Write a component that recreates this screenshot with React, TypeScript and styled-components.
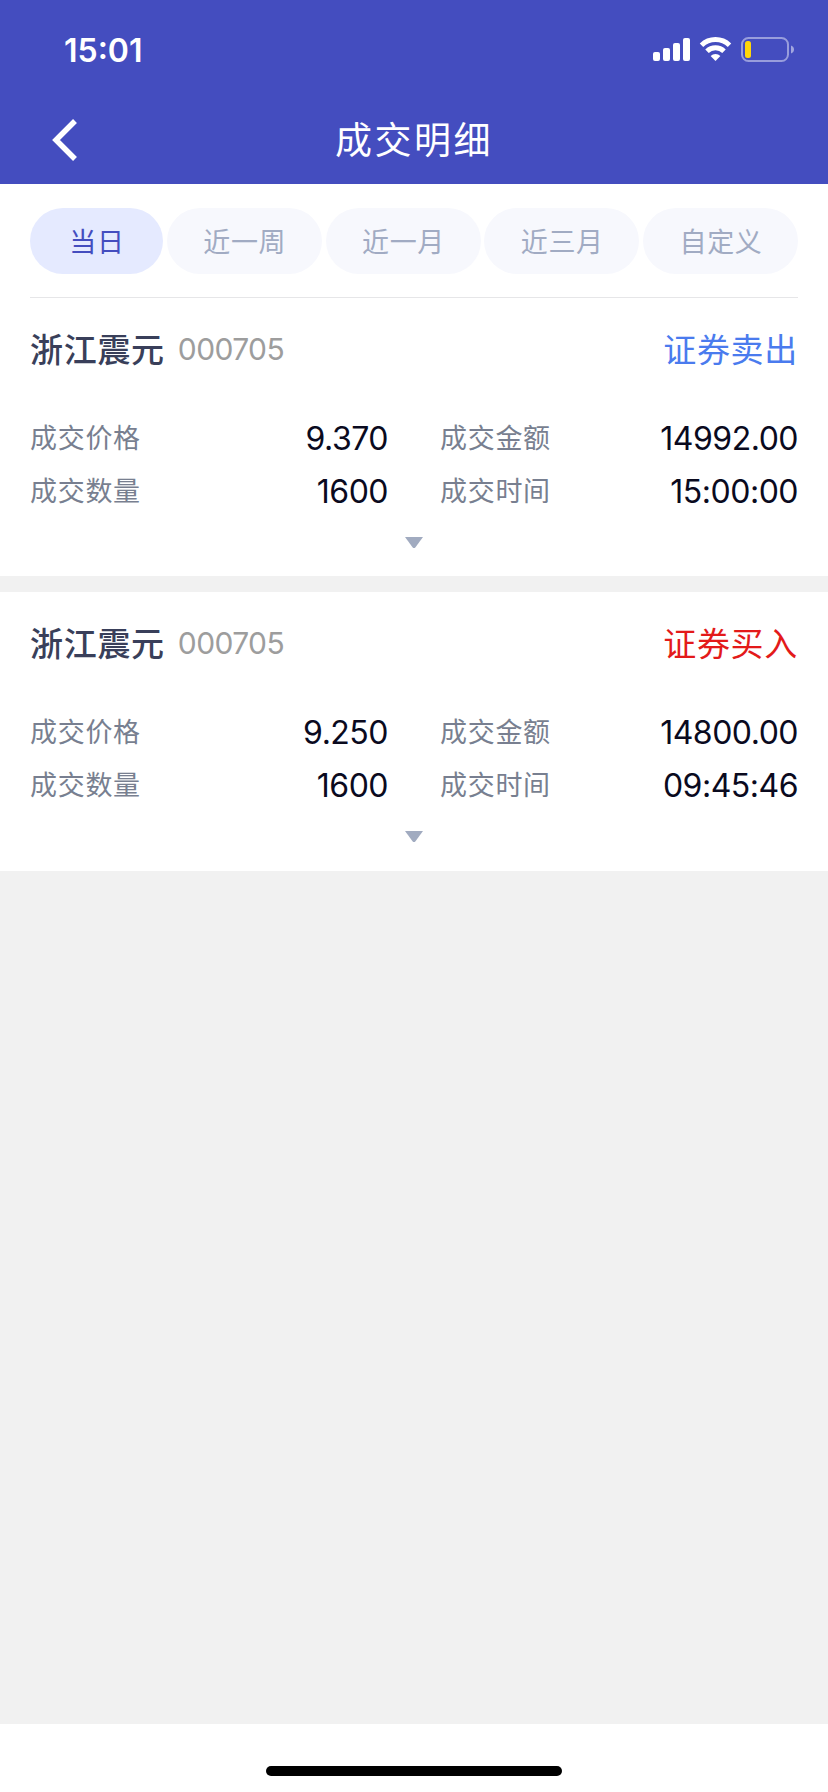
import React from "react";
import styled, { createGlobalStyle } from "styled-components";

const GlobalStyle = createGlobalStyle`
  * { box-sizing: border-box; }
  body {
    margin: 0;
    background: #f1f1f1;
    font-family: Inter, "Noto Sans CJK SC", sans-serif;
  }
`;

const Screen = styled.div`
  display: flex;
  flex-direction: column;
  width: 828px;
  height: 1792px;
  background: #f1f1f1;
`;

const Header = styled.header`
  height: 184px;
  background: #444dbf;
  color: #fff;
`;

const StatusBar = styled.div`
  display: flex;
  align-items: center;
  justify-content: space-between;
  height: 100px;
  padding: 0 34px 0 64px;
`;

const Clock = styled.span`
  padding-top: 1px;
  font-size: 32px;
  font-weight: 600;
  line-height: 40px;
  letter-spacing: 0;
`;

const StatusIcons = styled.svg`
  display: block;
  width: 142px;
  height: 26px;
`;

const NavBar = styled.div`
  display: grid;
  grid-template-columns: 120px 1fr 120px;
  grid-template-rows: 80px;
  align-items: center;
  height: 80px;
`;

const BackButton = styled.button`
  display: flex;
  height: 80px;
  padding: 0 0 0 52px;
  align-items: center;
  border: 0;
  background: none;
`;

const Title = styled.h1`
  margin: 0;
  padding-top: 2px;
  font-size: 37px;
  font-weight: 400;
  line-height: 78px;
  letter-spacing: 2.5px;
  text-align: center;
`;

const Filters = styled.nav`
  display: flex;
  justify-content: space-between;
  height: 114px;
  padding: 24px 30px 0;
  background: #fff;
`;

const FilterTab = styled.button<{ $active?: boolean }>`
  width: ${(p) => (p.$active ? 133 : 155)}px;
  height: 66px;
  padding: 0 0 1px 1px;
  border: 0;
  border-radius: 33px;
  background: ${(p) => (p.$active ? "#e5eaff" : "#f7f8fd")};
  color: ${(p) => (p.$active ? "#444dbf" : "#a1abc3")};
  font-family: inherit;
  font-size: 27px;
  letter-spacing: 0.7px;
`;

const Divider = styled.hr`
  height: 1px;
  margin: -1px 30px 0;
  border: 0;
  background: #e6e6e8;
`;

const Card = styled.section`
  height: 278px;
  padding: 0 30px;
  background: #fff;

  & + & {
    height: 279px;
    margin-top: 16px;
  }
`;

const CardHead = styled.div`
  display: flex;
  align-items: center;
  height: 102px;
`;

const StockName = styled.h2`
  margin: 0;
  padding-bottom: 3px;
  color: #393f5a;
  font-size: 33px;
  font-weight: 500;
  letter-spacing: 0.7px;
`;

const StockCode = styled.span`
  margin-left: 13px;
  color: #9d9d9d;
  font-size: 30px;
  letter-spacing: -0.6px;
`;

const Side = styled.span<{ $side: "buy" | "sell" }>`
  margin-left: auto;
  padding-bottom: 3px;
  color: ${(p) => (p.$side === "buy" ? "#e31a1a" : "#4a7bee")};
  font-size: 33px;
  letter-spacing: 0.7px;
`;

const Details = styled.dl`
  display: grid;
  grid-template-columns: 1fr 1fr;
  grid-auto-rows: 53.3px;
  column-gap: 52px;
  margin: 0;
  padding-top: 11px;
`;

const Detail = styled.div`
  display: flex;
  align-items: center;
  justify-content: space-between;
`;

const Label = styled.dt`
  padding-bottom: 3px;
  color: #787f90;
  font-size: 27px;
  letter-spacing: 0.7px;
`;

const Value = styled.dd`
  margin: 0;
  padding-top: 1px;
  color: #0a0a1e;
  font-size: 32px;
  letter-spacing: -0.5px;
`;

const Expand = styled.button`
  display: block;
  margin: 19.4px auto 0;
  padding: 0;
  border: 0;
  background: none;
`;

const Arrow = styled.svg`
  display: block;
`;

const HomeArea = styled.footer`
  display: flex;
  justify-content: center;
  height: 68px;
  margin-top: auto;
  padding-top: 42px;
  background: #fff;
`;

const HomeIndicator = styled.div`
  width: 296px;
  height: 10px;
  border-radius: 5px;
  background: #000;
`;

const filters = ["当日", "近一周", "近一月", "近三月", "自定义"];

type Trade = {
  name: string;
  code: string;
  side: "buy" | "sell";
  sideText: string;
  fields: [string, string][];
};

const trades: Trade[] = [
  {
    name: "浙江震元",
    code: "000705",
    side: "sell",
    sideText: "证券卖出",
    fields: [
      ["成交价格", "9.370"],
      ["成交金额", "14992.00"],
      ["成交数量", "1600"],
      ["成交时间", "15:00:00"],
    ],
  },
  {
    name: "浙江震元",
    code: "000705",
    side: "buy",
    sideText: "证券买入",
    fields: [
      ["成交价格", "9.250"],
      ["成交金额", "14800.00"],
      ["成交数量", "1600"],
      ["成交时间", "09:45:46"],
    ],
  },
];

function PhoneStatus() {
  return (
    <StatusIcons viewBox="0 0 142 26" fill="#fff">
      <rect x="1" y="15" width="7" height="9" rx="2" />
      <rect x="11" y="11" width="7" height="13" rx="2" />
      <rect x="21" y="6" width="7" height="18" rx="2" />
      <rect x="31" y="1" width="7" height="23" rx="2" />
      <g fill="none" stroke="#fff" strokeWidth="5">
        <path d="M49.5 8.2a20.2 20.2 0 0 1 28 0" />
        <path d="M55 14.2a12.2 12.2 0 0 1 17 0" />
      </g>
      <path d="M63.500 24l-4.900-5a7 7 0 0 1 9.800 0z" />
      <rect x="90" y="1" width="46" height="23" rx="6.500" fill="none" stroke="#fff" strokeOpacity=".45" strokeWidth="2" />
      <rect x="93" y="4" width="6" height="17" rx="2.500" fill="#ffd60a" />
      <path d="M139 8.500c4 1.300 4 6.700 0 8z" fillOpacity=".5" />
    </StatusIcons>
  );
}

function TradeCard({ trade }: { trade: Trade }) {
  return (
    <Card>
      <CardHead>
        <StockName>{trade.name}</StockName>
        <StockCode>{trade.code}</StockCode>
        <Side $side={trade.side}>{trade.sideText}</Side>
      </CardHead>
      <Details>
        {trade.fields.map(([label, value]) => (
          <Detail key={label}>
            <Label>{label}</Label>
            <Value>{value}</Value>
          </Detail>
        ))}
      </Details>
      <Expand aria-label="展开">
        <Arrow width="18" height="12" viewBox="0 0 18 12">
          <path d="M0 0h18l-7.500 10.200q-1.500 1.800-3 0z" fill="#a1abc0" />
        </Arrow>
      </Expand>
    </Card>
  );
}

export default function App() {
  return (
    <Screen>
      <GlobalStyle />
      <Header>
        <StatusBar>
          <Clock>15:01</Clock>
          <PhoneStatus />
        </StatusBar>
        <NavBar>
          <BackButton aria-label="返回">
            <svg width="26" height="42" viewBox="0 0 26 42">
              <path d="M23 2L4 21l19 19" fill="none" stroke="#fff" strokeWidth="5.500" />
            </svg>
          </BackButton>
          <Title>成交明细</Title>
        </NavBar>
      </Header>
      <Filters>
        {filters.map((text, i) => (
          <FilterTab key={text} $active={i === 0}>
            {text}
          </FilterTab>
        ))}
      </Filters>
      <Divider />
      {trades.map((trade) => (
        <TradeCard key={trade.side} trade={trade} />
      ))}
      <HomeArea>
        <HomeIndicator />
      </HomeArea>
    </Screen>
  );
}
